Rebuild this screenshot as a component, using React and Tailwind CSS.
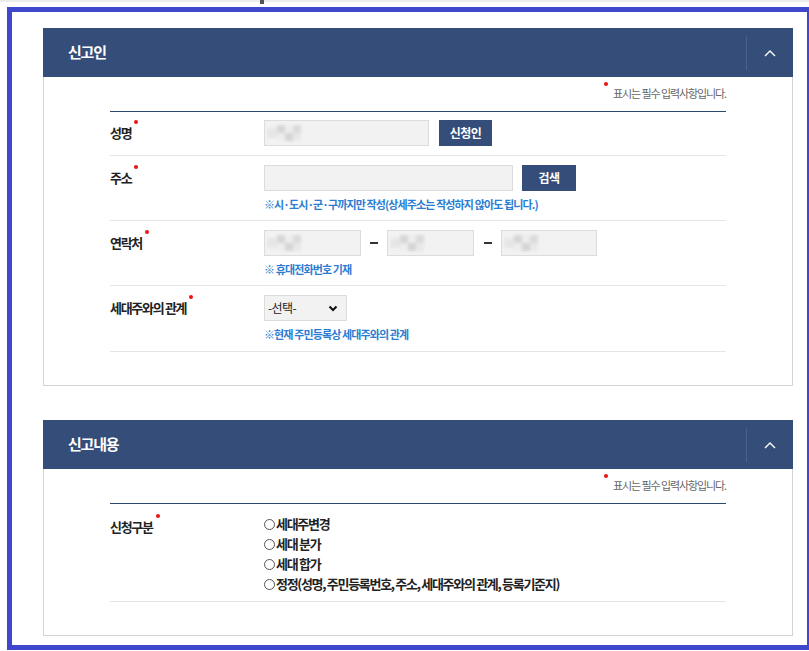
import React from "react";

const navy = "bg-[#344d79]";

function Dot() {
    return <span className="absolute -right-[7px] -top-[5px] w-[4px] h-[4px] rounded-full bg-[#ee1111]"></span>;
}

function Label({ text }) {
    return (
        <div className="w-[154px] shrink-0 h-[26px] flex items-center">
            <span className="relative text-[13px] font-bold text-[#222] tracking-[-0.1em] leading-[16px]">
                {text}
                <Dot />
            </span>
        </div>
    );
}

function Blob({ w = 44 }) {
    return (
        <div className="flex items-center h-full blur-[1.5px] opacity-80" style={{ width: w }}>
            <div className="w-[10px] h-[10px] bg-[#e3e3e3]"></div>
            <div className="flex flex-col">
                <div className="flex">
                    <div className="w-[8px] h-[8px] bg-[#d0d0d0]"></div>
                    <div className="w-[8px] h-[8px] bg-[#ececec]"></div>
                    <div className="w-[8px] h-[8px] bg-[#d6d6d6]"></div>
                </div>
                <div className="flex">
                    <div className="w-[8px] h-[8px] bg-[#ececec]"></div>
                    <div className="w-[8px] h-[8px] bg-[#cfcfcf]"></div>
                    <div className="w-[8px] h-[8px] bg-[#e6e6e6]"></div>
                </div>
            </div>
        </div>
    );
}

function Box({ w, children }) {
    return (
        <div className={`${w} h-[26px] bg-[#f2f2f2] border border-[#dcdcdc] flex items-center pl-[2px] overflow-hidden`}>
            {children}
        </div>
    );
}

function Btn({ text, w }) {
    return (
        <div className={`${w} h-[26px] ${navy} text-white text-[12px] font-bold flex items-center justify-center tracking-[-0.05em]`}>
            {text}
        </div>
    );
}

function Dash({ w }) {
    return (
        <div className={`${w} flex justify-center`}>
            <div className="w-[8px] h-[2px] bg-[#333]"></div>
        </div>
    );
}

function Hint({ text }) {
    return <div className="mt-[6px] text-[11px] leading-[14px] font-bold text-[#2b7dd2] tracking-[-0.08em]">{text}</div>;
}

function Section({ title, children }) {
    return (
        <div>
            <div className={`${navy} h-[49px] flex items-center`}>
                <div className="flex-1 pl-[25px] text-white text-[15px] font-bold tracking-[-0.08em]">{title}</div>
                <div className="w-[47px] h-[34px] border-l border-[#4b6290] flex items-center justify-center">
                    <svg width="12" height="8" viewBox="0 0 12 8" fill="none">
                        <path d="M1 7 L6 2 L11 7" stroke="white" strokeWidth="1.4" />
                    </svg>
                </div>
            </div>
            <div className="border-x border-b border-[#d4d4d4] px-[66px] pb-[33px]">
                <div className="h-[35px] border-b border-[#2f4670] flex items-center justify-end pb-[1px]">
                    <span className="relative text-[11px] text-[#666] tracking-[-0.1em]">
                        <span className="absolute -left-[9px] -top-[3px] w-[4px] h-[4px] rounded-full bg-[#ee1111]"></span>
                        표시는 필수 입력사항입니다.
                    </span>
                </div>
                {children}
            </div>
        </div>
    );
}

function Radio({ text }) {
    return (
        <div className="h-[20px] flex items-center text-[13px] font-bold text-[#222] tracking-[-0.1em]">
            <span className="w-[11px] h-[11px] rounded-full border border-[#555] mr-[1px] shrink-0"></span>
            {text}
        </div>
    );
}

export default function App() {
    return (
        <div className="w-[809px] h-[651px] bg-white overflow-hidden font-['Noto_Sans_CJK_KR',sans-serif]">
            <div className="h-[2px] bg-[#ececec] relative">
                <div className="absolute left-[260px] top-0 w-[4px] h-[4px] bg-[#555]"></div>
            </div>
            <div className="mt-[5px] ml-[7px] w-[805px] h-[643px] border-[5px] border-[#3f47cc] pt-[16px] pl-[31px] pr-[14px]">
                <Section title="신고인">
                    <div className="flex pt-[8px] pb-[9px] border-b border-[#e6e6e6]">
                        <Label text="성명" />
                        <div className="flex gap-[10px]">
                            <Box w="w-[165px]"><Blob /></Box>
                            <Btn text="신청인" w="w-[53px]" />
                        </div>
                    </div>
                    <div className="flex pt-[9px] pb-[9px] border-b border-[#e6e6e6]">
                        <Label text="주소" />
                        <div>
                            <div className="flex gap-[9px]">
                                <Box w="w-[249px]" />
                                <Btn text="검색" w="w-[54px]" />
                            </div>
                            <Hint text="※시·도시·군·구까지만 작성(상세주소는 작성하지 않아도 됩니다.)" />
                        </div>
                    </div>
                    <div className="flex pt-[9px] pb-[9px] border-b border-[#e6e6e6]">
                        <Label text="연락처" />
                        <div>
                            <div className="flex items-center">
                                <Box w="w-[97px]"><Blob w={34} /></Box>
                                <Dash w="w-[26px]" />
                                <Box w="w-[87px]"><Blob w={38} /></Box>
                                <Dash w="w-[27px]" />
                                <Box w="w-[96px]"><Blob w={36} /></Box>
                            </div>
                            <Hint text="※ 휴대전화번호 기재" />
                        </div>
                    </div>
                    <div className="flex pt-[9px] pb-[10px] border-b border-[#e6e6e6]">
                        <Label text="세대주와의 관계" />
                        <div>
                            <div className="w-[83px] h-[26px] bg-[#f2f2f2] border border-[#dcdcdc] flex items-center justify-between pl-[3px] pr-[8px]">
                                <span className="text-[12px] text-[#222] tracking-[-0.05em]">-선택-</span>
                                <svg width="10" height="7" viewBox="0 0 10 7" fill="none">
                                    <path d="M1.5 1.5 L5 5 L8.5 1.5" stroke="#111" strokeWidth="2" />
                                </svg>
                            </div>
                            <Hint text="※현재 주민등록상 세대주와의 관계" />
                        </div>
                    </div>
                </Section>

                <div className="h-[34px]"></div>

                <Section title="신고내용">
                    <div className="flex pt-[10px] pb-[7px] border-b border-[#e6e6e6]">
                        <Label text="신청구분" />
                        <div>
                            <Radio text="세대주변경" />
                            <Radio text="세대 분가" />
                            <Radio text="세대 합가" />
                            <Radio text="정정(성명, 주민등록번호, 주소, 세대주와의 관계, 등록기준지)" />
                        </div>
                    </div>
                </Section>
            </div>
        </div>
    );
}
